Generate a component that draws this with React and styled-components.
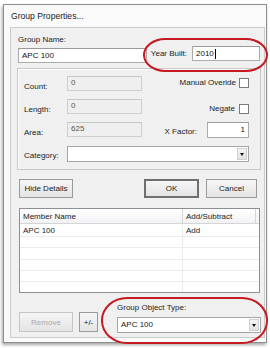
import styled, { createGlobalStyle } from "styled-components";

const Global = createGlobalStyle`
  html, body {
    margin: 0;
    padding: 0;
    background: #ffffff;
  }
  body {
    font-family: "Liberation Sans", Arial, sans-serif;
    font-size: 8px;
    color: #222;
  }
`;

const Stage = styled.div`
  position: relative;
  width: 270px;
  height: 348px;
  overflow: hidden;
`;

const Window = styled.div`
  margin: 4px 0 0 3px;
  width: 262px;
  height: 337px;
  border: 1px solid #8e8e8e;
  background: #fafafa;
  box-shadow: -1px 2px 3px rgba(0, 0, 0, 0.35);
  display: flex;
  flex-direction: column;
`;

const Title = styled.div`
  height: 22px;
  padding-left: 7px;
  display: flex;
  align-items: center;
  font-size: 8.6px;
  color: #1a1a1a;
`;

const Panel = styled.div`
  flex: 1;
  margin: 0 1px 4px 6px;
  border: 1px solid #cbcbcb;
  background: #f0f0f0;
  padding: 0 3px 0 6px;
  display: flex;
  flex-direction: column;
`;

const Label = styled.span`
  line-height: 10px;
  white-space: nowrap;
  color: ${(p) => (p.$disabled ? "#a3a3a3" : "#222")};
`;

const TopRow = styled.div`
  display: flex;
  justify-content: space-between;
  align-items: flex-end;
  margin-top: 7px;
`;

const NameCol = styled.div`
  display: flex;
  flex-direction: column;
  gap: 3px;
  padding-left: 1px;
`;

const YearRow = styled.div`
  display: flex;
  align-items: center;
  gap: 5px;
  margin: 0 1px 2px 0;
`;

const TextBox = styled.div`
  box-sizing: border-box;
  width: ${(p) => p.$w}px;
  height: ${(p) => p.$h || 15}px;
  border: 1px solid ${(p) => (p.$disabled ? "#cfcfcf" : "#ababab")};
  border-top-color: ${(p) => (p.$disabled ? "#c6c6c6" : "#9a9a9a")};
  background: ${(p) => (p.$disabled ? "#efefef" : "#fff")};
  color: ${(p) => (p.$disabled ? "#555" : "#111")};
  padding: ${(p) => (p.$disabled ? "1px 3px" : "0 3px")};
  display: flex;
  align-items: ${(p) => (p.$disabled ? "flex-start" : "center")};
  justify-content: ${(p) => (p.$right ? "flex-end" : "flex-start")};
  line-height: 10px;
  white-space: nowrap;
`;

const Caret = styled.span`
  display: inline-block;
  width: 1px;
  height: 10px;
  background: #000;
  margin-left: 1px;
`;

const Group = styled.div`
  margin-top: 5px;
  height: 102px;
  box-sizing: border-box;
  border: 1px solid #c9c9c9;
  box-shadow: inset 1px 1px 0 #fff;
  padding: 7px 11px 0 6px;
  display: flex;
  flex-direction: column;
`;

const FieldRow = styled.div`
  display: flex;
  align-items: flex-start;
  height: ${(p) => p.$h || 23}px;
`;

const FieldLabel = styled(Label)`
  width: 43px;
  padding-top: ${(p) => (p.$top === undefined ? 5 : p.$top)}px;
`;

const RightSide = styled.div`
  flex: 1;
  display: flex;
  justify-content: flex-end;
  align-items: center;
  gap: 3px;
  padding-top: ${(p) => p.$top || 0}px;
`;

const Check = styled.span`
  box-sizing: border-box;
  width: 10px;
  height: 10px;
  border: 1px solid #7a7a7a;
  background: #fff;
`;

const Select = styled.div`
  box-sizing: border-box;
  width: ${(p) => p.$w}px;
  height: ${(p) => p.$h || 16}px;
  border: 1px solid #a5a5a5;
  background: #fff;
  display: flex;
  align-items: center;
  padding-left: 3px;
  line-height: 10px;
`;

const SelectText = styled.span`
  flex: 1;
`;

const DropButton = styled.span`
  width: 10px;
  height: calc(100% - 2px);
  margin-right: 1px;
  background: linear-gradient(#f4f4f4, #e2e2e2);
  border: 1px solid #d0d0d0;
  box-sizing: border-box;
  display: flex;
  align-items: center;
  justify-content: center;
  &::after {
    content: "";
    border-left: 2.5px solid transparent;
    border-right: 2.5px solid transparent;
    border-top: 3px solid #111;
  }
`;

const ButtonRow = styled.div`
  display: flex;
  align-items: center;
  margin-top: 9px;
  padding: 0 4px 0 2px;
  gap: 7px;
`;

const Button = styled.div`
  box-sizing: border-box;
  width: ${(p) => p.$w}px;
  height: ${(p) => p.$h || 19}px;
  border: ${(p) => (p.$default ? "2px solid #6f6f6f" : "1px solid #9a9a9a")};
  border-color: ${(p) => (p.$disabled ? "#c6c6c6" : undefined)};
  background: linear-gradient(#f6f6f6, #e4e4e4);
  color: ${(p) => (p.$disabled ? "#a8a8a8" : "#222")};
  display: flex;
  align-items: center;
  justify-content: center;
  margin-left: ${(p) => (p.$push ? "auto" : "0")};
  white-space: nowrap;
`;

const List = styled.div`
  margin: 10px 1px 0 2px;
  height: 85px;
  box-sizing: border-box;
  border: 1px solid #8c8f95;
  background: #fff;
  display: flex;
  flex-direction: column;
  overflow: hidden;
`;

const ListHeader = styled.div`
  display: grid;
  grid-template-columns: 163px 73px 1fr;
  height: 14px;
  flex: none;
  border-bottom: 1px solid #d5d5d5;
  background: linear-gradient(#ffffff, #f1f2f4);
`;

const HeaderCell = styled.div`
  display: flex;
  align-items: center;
  padding-left: 3px;
  border-right: 1px solid #d5d5d5;
`;

const ListRow = styled.div`
  display: grid;
  grid-template-columns: 163px 73px 1fr;
  height: 11.25px;
  flex: none;
  box-sizing: border-box;
  border-bottom: 1px solid #ececec;
`;

const Cell = styled.div`
  display: flex;
  align-items: center;
  padding-left: 3px;
  border-right: 1px solid ${(p) => (p.$last ? "transparent" : "#ececec")};
`;

const BottomRow = styled.div`
  display: flex;
  align-items: flex-end;
  margin-top: 10px;
  padding: 0 0 0 2px;
`;

const SmallButtons = styled.div`
  display: flex;
  gap: 6px;
  margin-bottom: 1px;
`;

const TypeCol = styled.div`
  margin-left: auto;
  display: flex;
  flex-direction: column;
  gap: 4px;
`;

const Ring = styled.div`
  position: absolute;
  left: ${(p) => p.$x}px;
  top: ${(p) => p.$y}px;
  width: ${(p) => p.$w}px;
  height: ${(p) => p.$h}px;
  box-sizing: border-box;
  border: 2px solid #c51a22;
  border-radius: ${(p) => p.$r};
  pointer-events: none;
`;

const members = [{ name: "APC 100", op: "Add" }];

export default function App() {
  const blanks = Array.from({ length: 6 });
  return (
    <Stage>
      <Global />
      <Window>
        <Title>Group Properties...</Title>
        <Panel>
          <TopRow>
            <NameCol>
              <Label>Group Name:</Label>
              <TextBox $w={129}>APC 100</TextBox>
            </NameCol>
            <YearRow>
              <Label>Year Built:</Label>
              <TextBox $w={68} $h={15}>
                2010
                <Caret />
              </TextBox>
            </YearRow>
          </TopRow>

          <Group>
            <FieldRow>
              <FieldLabel $top={6}>Count:</FieldLabel>
              <TextBox $w={75} $disabled>
                0
              </TextBox>
              <RightSide $top={2}>
                <Label>Manual Overide</Label>
                <Check />
              </RightSide>
            </FieldRow>
            <FieldRow>
              <FieldLabel $top={6}>Length:</FieldLabel>
              <TextBox $w={75} $disabled>
                0
              </TextBox>
              <RightSide $top={5}>
                <Label>Negate</Label>
                <Check style={{ marginLeft: 1 }} />
              </RightSide>
            </FieldRow>
            <FieldRow $h={25}>
              <FieldLabel $top={6}>Area:</FieldLabel>
              <TextBox $w={75} $disabled>
                625
              </TextBox>
              <RightSide>
                <Label style={{ marginRight: 7, paddingTop: 5 }}>X Factor:</Label>
                <TextBox $w={42} $h={16} $right>
                  1
                </TextBox>
              </RightSide>
            </FieldRow>
            <FieldRow>
              <FieldLabel $top={5}>Category:</FieldLabel>
              <Select $w={184} $h={16}>
                <SelectText />
                <DropButton />
              </Select>
            </FieldRow>
          </Group>

          <ButtonRow>
            <Button $w={54}>Hide Details</Button>
            <Button $w={55} $push $default>
              OK
            </Button>
            <Button $w={51}>Cancel</Button>
          </ButtonRow>

          <List>
            <ListHeader>
              <HeaderCell>Member Name</HeaderCell>
              <HeaderCell>Add/Subtract</HeaderCell>
              <HeaderCell />
            </ListHeader>
            {members.map((m) => (
              <ListRow key={m.name} style={{ height: 13 }}>
                <Cell>{m.name}</Cell>
                <Cell $last>{m.op}</Cell>
              </ListRow>
            ))}
            {blanks.map((_, i) => (
              <ListRow key={i}>
                <Cell />
                <Cell $last />
              </ListRow>
            ))}
          </List>

          <BottomRow>
            <SmallButtons>
              <Button $w={54} $h={20} $disabled>
                Remove
              </Button>
              <Button $w={19} $h={20}>
                +/-
              </Button>
            </SmallButtons>
            <TypeCol>
              <Label>Group Object Type:</Label>
              <Select $w={144} $h={16}>
                <SelectText>APC 100</SelectText>
                <DropButton />
              </Select>
            </TypeCol>
          </BottomRow>
        </Panel>
      </Window>
      <Ring $x={143} $y={38} $w={125} $h={34} $r="22px / 17px" />
      <Ring $x={101} $y={297} $w={167} $h={47} $r="26px / 23px" />
    </Stage>
  );
}
